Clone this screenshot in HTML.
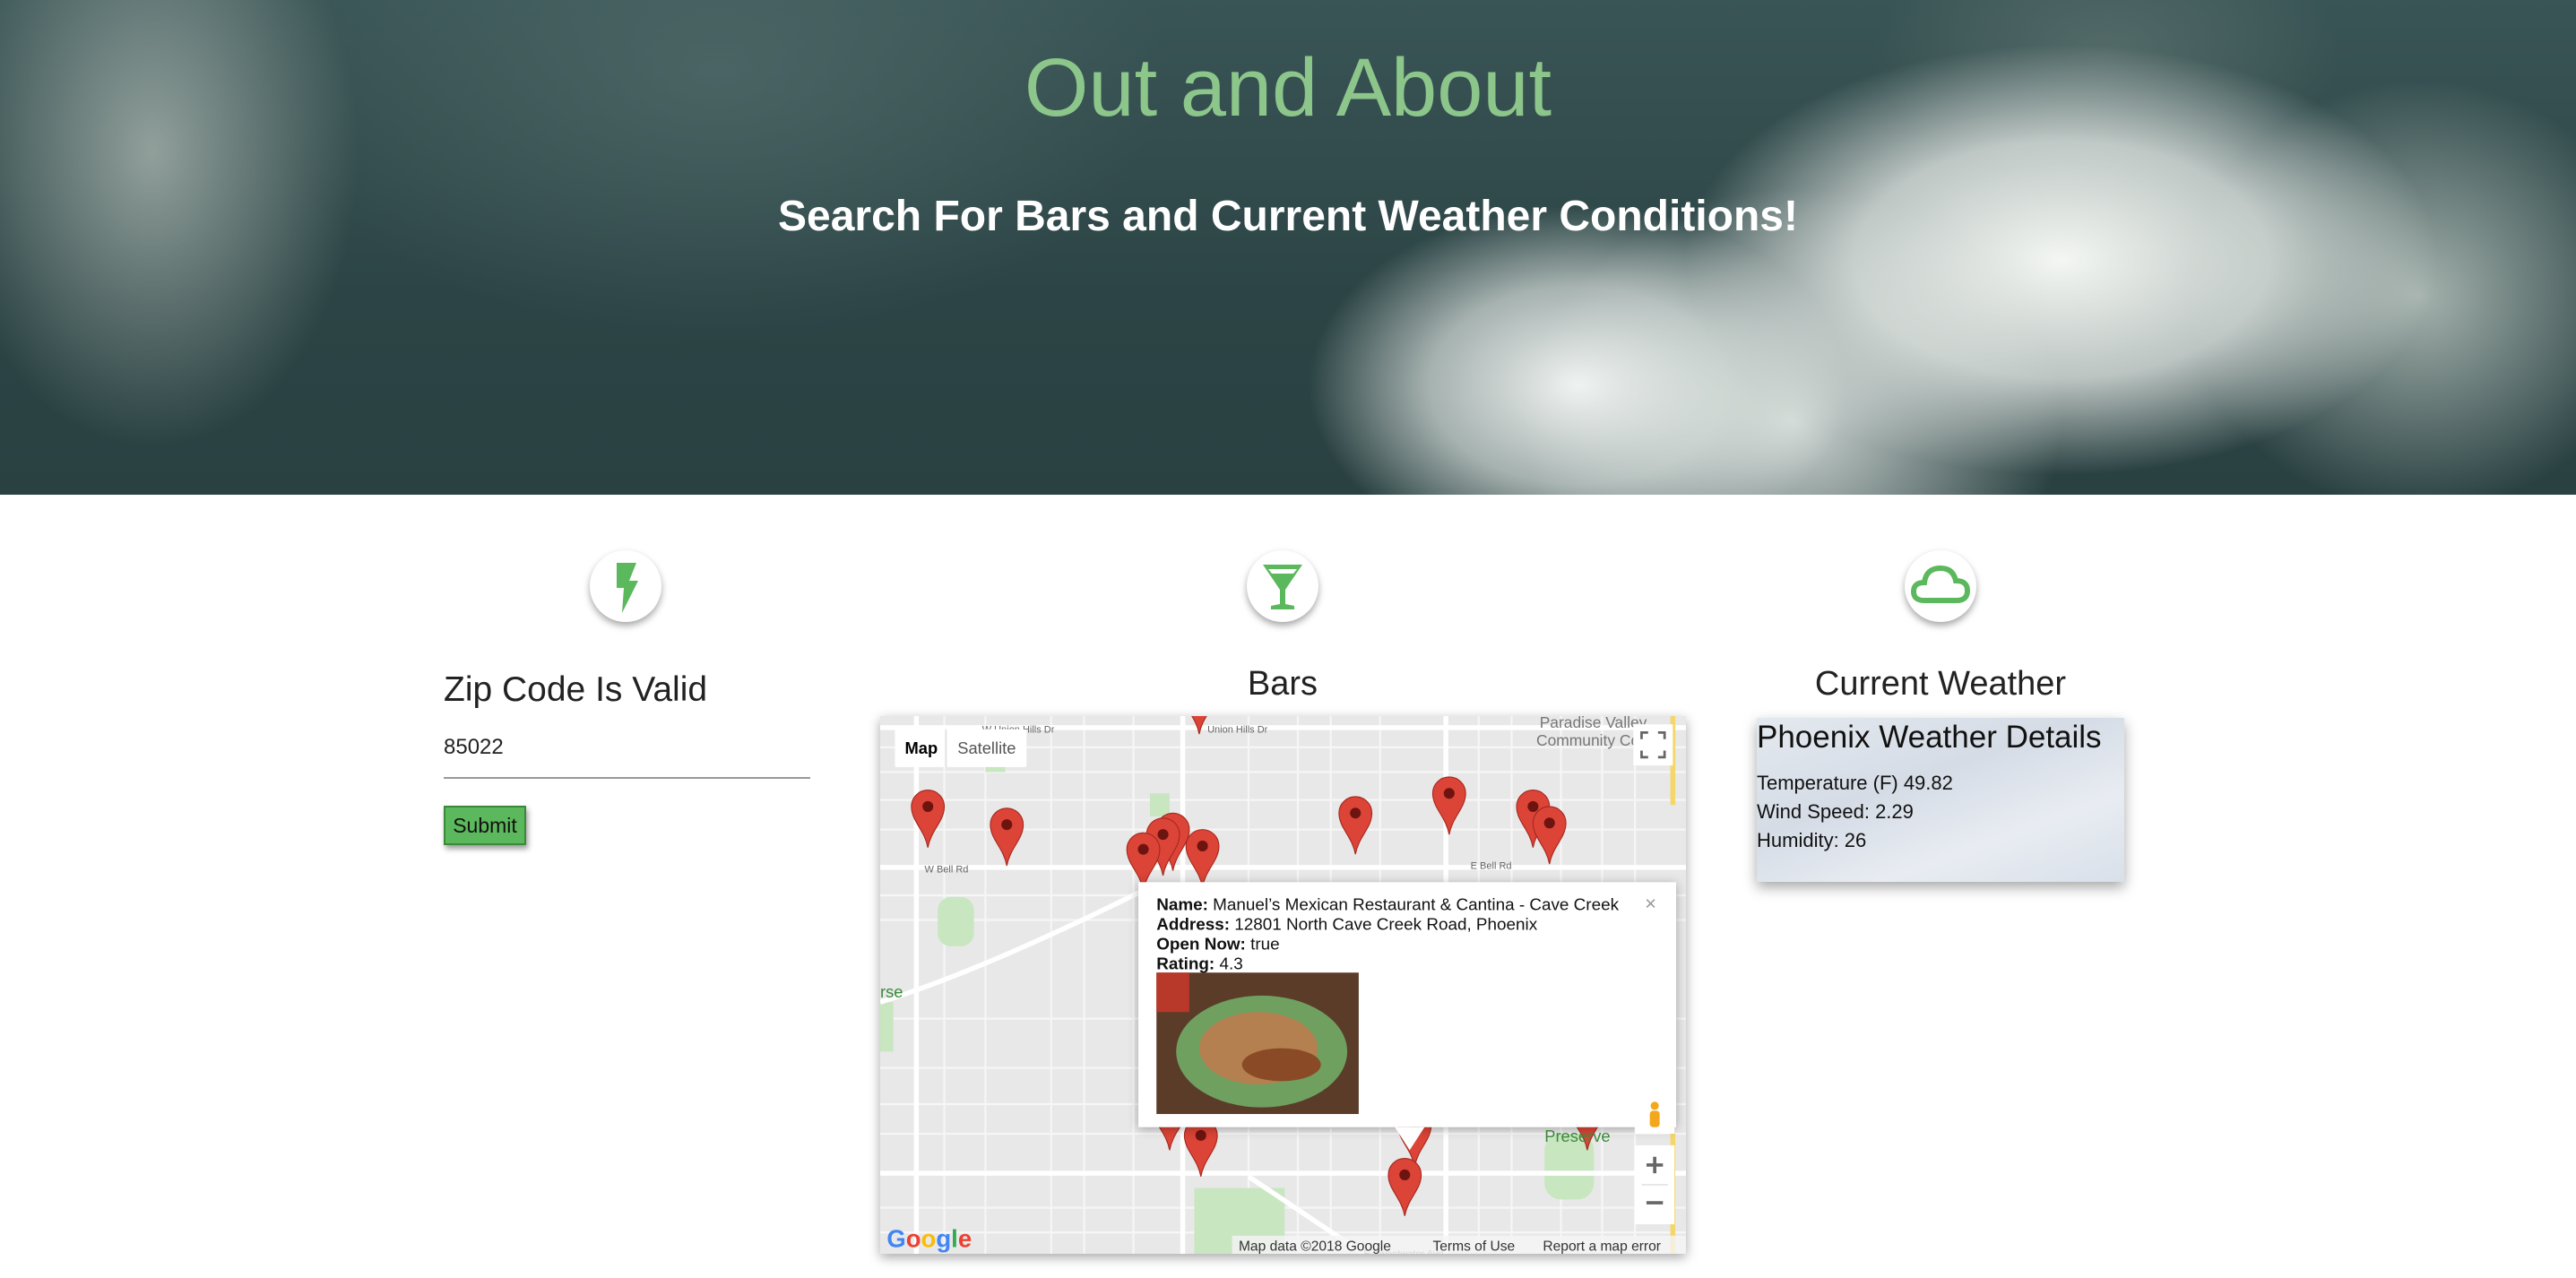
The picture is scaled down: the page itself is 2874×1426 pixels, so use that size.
<!DOCTYPE html>
<html><head><meta charset="utf-8"><style>
*{margin:0;padding:0;box-sizing:border-box}
body{width:2874px;height:1426px;overflow:hidden;background:#fff;font-family:"Liberation Sans",Arial,sans-serif;position:relative}
.hdr{position:absolute;left:0;top:0;width:2874px;height:552px;overflow:hidden;
background:
radial-gradient(ellipse 420px 240px at 2300px 290px,rgba(250,252,248,.97),rgba(236,240,236,.75) 55%,rgba(200,210,205,0) 100%),
radial-gradient(ellipse 300px 200px at 1760px 430px,rgba(248,250,248,.95),rgba(232,238,234,.65) 55%,rgba(200,210,205,0) 100%),
radial-gradient(ellipse 300px 260px at 2000px 470px,rgba(235,240,236,.85),rgba(200,210,205,0) 100%),
radial-gradient(ellipse 260px 240px at 2700px 330px,rgba(205,215,208,.75),rgba(200,210,205,0) 100%),
radial-gradient(ellipse 260px 150px at 2350px 60px,rgba(110,130,125,.5),rgba(110,130,125,0) 100%),
radial-gradient(ellipse 230px 330px at 170px 170px,rgba(185,195,188,.7),rgba(140,160,155,0) 100%),
radial-gradient(ellipse 500px 300px at 800px 80px,rgba(90,115,115,.55),rgba(60,85,85,0) 100%),
linear-gradient(180deg,#3a5556 0%,#2c4445 60%,#2a4142 100%);}
.t1{position:absolute;left:0;width:2874px;text-align:center;top:46px;font-size:92px;color:#8cc68a;font-weight:normal}
.t2{position:absolute;left:0;width:2874px;text-align:center;top:214px;font-size:48px;color:#fff;font-weight:bold}
.ic{position:absolute;width:80px;height:80px;border-radius:50%;background:#fff;box-shadow:0 4px 8px rgba(0,0,0,.35);top:614px}
.h{position:absolute;font-size:38px;color:#222}
</style></head><body>
<div class="hdr"><div class="t1">Out and About</div><div class="t2">Search For Bars and Current Weather Conditions!</div></div>

<div class="ic" style="left:658px"><svg width="80" height="80" viewBox="0 0 80 80"><path d="M30 14 L52 14 L44 34 L54 34 L36 70 L38 42 L30 42 Z" fill="#5cb85c"/></svg></div>
<div class="ic" style="left:1391px"><svg width="80" height="80" viewBox="0 0 80 80"><path d="M18 16 L62 16 L43 44 L43 60 L53 62 L53 66 L27 66 L27 62 L37 60 L37 44 Z" fill="#5cb85c"/><path d="M24 21 L56 21 L52 26 L28 26Z" fill="#fff"/></svg></div>
<div class="ic" style="left:2125px"><svg width="80" height="80" viewBox="0 0 80 80"><path d="M22 56 Q10 56 10 46 Q10 36 22 36 Q24 20 40 20 Q54 20 57 34 Q70 34 70 45 Q70 56 58 56 Z" fill="none" stroke="#5cb85c" stroke-width="6"/></svg></div>

<div class="h" style="left:495px;top:748px;font-size:39px">Zip Code Is Valid</div>
<div class="h" style="left:1381px;top:742px;width:100px;text-align:center">Bars</div>
<div class="h" style="left:1965px;top:742px;width:400px;text-align:center">Current Weather</div>

<div style="position:absolute;left:495px;top:820px;font-size:24px;color:#222">85022</div>
<div style="position:absolute;left:495px;top:867px;width:409px;height:2px;background:#999"></div>
<div style="position:absolute;left:495px;top:899px;width:92px;height:44px;background:#5cb85c;border:2px solid #3a8a3a;box-shadow:2px 4px 6px rgba(0,0,0,.4);font-size:23px;line-height:40px;text-align:center;color:#111">Submit</div>

<div style="position:absolute;left:1960px;top:801px;width:410px;height:183px;box-shadow:0 6px 14px rgba(0,0,0,.35);background:linear-gradient(160deg,#e4e9ef 0%,#d5dce6 40%,#e8ecf2 70%,#d9e0ea 100%)">
<div style="position:absolute;left:0;top:2px;font-size:35px;color:#111;white-space:nowrap">Phoenix Weather Details</div>
<div style="position:absolute;left:0;top:57px;font-size:22px;line-height:32px;color:#111">Temperature (F) 49.82<br>Wind Speed: 2.29<br>Humidity: 26</div>
</div>

<div style="position:absolute;left:982px;top:799px;width:899px;height:600px;box-shadow:0 4px 12px rgba(0,0,0,.35)">
<svg width="899" height="600" viewBox="536 436 490 327" font-family="Liberation Sans, Arial, sans-serif">
<rect x="536" y="436" width="490" height="327" fill="#e8e8e8"/>
<g stroke="#f6f6f6" stroke-width="1.2">
<path d="M536 455H1026M536 470H1026M536 487H1026M536 505H1026M536 545H1026M536 560H1026M536 620H1026M536 650H1026M536 672H1026M536 690H1026M536 735H1026M536 750H1026"/>
<path d="M575 436V763M600 436V763M640 436V763M660 436V763M690 436V763M760 436V763M790 436V763M810 436V763M840 436V763M900 436V763M920 436V763M950 436V763M975 436V763M995 436V763"/>
</g>
<g fill="#c8e6c0"><rect x="571" y="546" width="22" height="30" rx="8"/><rect x="727" y="723" width="55" height="40"/><rect x="940" y="690" width="30" height="40" rx="10"/><rect x="536" y="610" width="8" height="30"/><rect x="600" y="460" width="12" height="10"/><rect x="700" y="483" width="12" height="14"/></g>
<g stroke="#fff" stroke-width="3" fill="none">
<path d="M536 443H1026M536 528H1026M536 714H1026M558 436V763M720 436V763M880 436V763M536 610 Q600 590 700 540"/>
<path d="M760 716 L830 763"/>
</g>
<path d="M1018 490 L1018 436 M1018 690 V763" stroke="#f5d66a" stroke-width="3"/>
<g font-size="6" fill="#666">
<text x="598" y="446">W Union Hills Dr</text><text x="735" y="446">Union Hills Dr</text><text x="563" y="531">W Bell Rd</text><text x="895" y="529">E Bell Rd</text>
<text x="830" y="765">E Sweetwater Ave</text>
</g>
<text x="937" y="443" font-size="9.5" fill="#777">Paradise Valley</text>
<text x="935" y="454" font-size="9.5" fill="#777">Community College</text>
<text x="536" y="607" font-size="10" fill="#3a8a3a">rse</text>
<defs><g id="pin"><path d="M0 0 C-2 -11 -10 -16 -10 -25 A10 10 0 1 1 10 -25 C10 -16 2 -11 0 0Z" fill="#db4437" stroke="#a5281e" stroke-width=".6"/><circle cx="0" cy="-25" r="3.3" fill="#6e1410"/></g></defs>
<use href="#pin" x="565" y="516"/><use href="#pin" x="613" y="527"/><use href="#pin" x="714" y="530"/><use href="#pin" x="708" y="533"/><use href="#pin" x="696" y="542"/><use href="#pin" x="732" y="540"/><use href="#pin" x="825" y="520"/><use href="#pin" x="882" y="508"/><use href="#pin" x="933" y="516"/><use href="#pin" x="943" y="526"/><use href="#pin" x="730" y="447"/><use href="#pin" x="712" y="700"/><use href="#pin" x="731" y="716"/><use href="#pin" x="861" y="710"/><use href="#pin" x="855" y="740"/><use href="#pin" x="966" y="700"/>
<rect x="545" y="444" width="80" height="23" fill="#fff" rx="1"/><line x1="576" y1="444" x2="576" y2="467" stroke="#e0e0e0"/>
<text x="551" y="459" font-size="10" font-weight="bold" fill="#000">Map</text><text x="583" y="459" font-size="10" fill="#555">Satellite</text>
<rect x="994" y="441" width="24" height="25" fill="#fff"/><path d="M999 450v-4h4M1013 450v-4h-4M999 457v4h4M1013 457v4h-4" stroke="#666" stroke-width="1.5" fill="none"/>
<rect x="693" y="537" width="327" height="149" fill="#fff" style="filter:drop-shadow(0 1px 3px rgba(0,0,0,.3))"/>
<path d="M849 686 L858 700 L867 686Z" fill="#fff"/>
<g font-size="10.3" fill="#111">
<text x="704" y="554"><tspan font-weight="bold">Name:</tspan> Manuel’s Mexican Restaurant &amp; Cantina - Cave Creek</text>
<text x="704" y="566"><tspan font-weight="bold">Address:</tspan> 12801 North Cave Creek Road, Phoenix</text>
<text x="704" y="578"><tspan font-weight="bold">Open Now:</tspan> true</text>
<text x="704" y="590"><tspan font-weight="bold">Rating:</tspan> 4.3</text>
</g>
<text x="1001" y="554" font-size="12" fill="#999">×</text>
<rect x="704" y="592" width="123" height="86" fill="#5a3c28"/>
<ellipse cx="768" cy="640" rx="52" ry="34" fill="#6fa060"/>
<ellipse cx="766" cy="638" rx="36" ry="22" fill="#b58050"/>
<ellipse cx="780" cy="648" rx="24" ry="10" fill="#8a4a25"/>
<rect x="704" y="592" width="20" height="24" fill="#b8382a"/>
<rect x="995" y="666" width="24" height="24" fill="#fff"/><circle cx="1007" cy="673" r="2.5" fill="#f3a81c"/><rect x="1004" y="676" width="6" height="10" rx="2" fill="#f3a81c"/>
<rect x="995" y="697" width="24" height="48" fill="#fff"/><line x1="999" y1="721" x2="1015" y2="721" stroke="#e6e6e6"/>
<path d="M1007 704v10M1002 709h10M1002 732h10" stroke="#666" stroke-width="2"/>
<text x="940" y="695" font-size="10" fill="#3a8a3a">Preserve</text>
<text x="540" y="759" font-size="15" font-weight="bold"><tspan fill="#4285f4">G</tspan><tspan fill="#ea4335">o</tspan><tspan fill="#fbbc05">o</tspan><tspan fill="#4285f4">g</tspan><tspan fill="#34a853">l</tspan><tspan fill="#ea4335">e</tspan></text>
<rect x="750" y="752" width="276" height="11" fill="rgba(245,245,245,.8)"/>
<text x="754" y="761" font-size="8.5" fill="#333">Map data ©2018 Google</text><text x="872" y="761" font-size="8.5" fill="#333">Terms of Use</text><text x="939" y="761" font-size="8.5" fill="#333">Report a map error</text>
</svg>
</div>
</body></html>
